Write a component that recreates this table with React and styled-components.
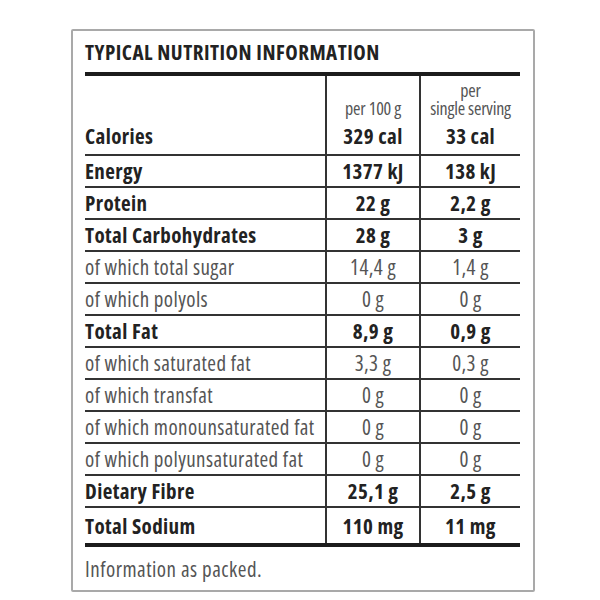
import styled, { createGlobalStyle } from "styled-components";

const nutrients = [
  { label: "Energy", per100: "1377 kJ", serving: "138 kJ", bold: true },
  { label: "Protein", per100: "22 g", serving: "2,2 g", bold: true },
  { label: "Total Carbohydrates", per100: "28 g", serving: "3 g", bold: true },
  { label: "of which total sugar", per100: "14,4 g", serving: "1,4 g" },
  { label: "of which polyols", per100: "0 g", serving: "0 g" },
  { label: "Total Fat", per100: "8,9 g", serving: "0,9 g", bold: true },
  { label: "of which saturated fat", per100: "3,3 g", serving: "0,3 g" },
  { label: "of which transfat", per100: "0 g", serving: "0 g" },
  { label: "of which monounsaturated fat", per100: "0 g", serving: "0 g" },
  { label: "of which polyunsaturated fat", per100: "0 g", serving: "0 g" },
  { label: "Dietary Fibre", per100: "25,1 g", serving: "2,5 g", bold: true },
  { label: "Total Sodium", per100: "110 mg", serving: "11 mg", bold: true },
];

const GlobalStyle = createGlobalStyle`
  body {
    margin: 0;
    background: #fff;
    font-family: "Open Sans", "Liberation Sans", sans-serif;
    font-stretch: 75%;
  }
`;

export default function App() {
  return (
    <>
      <GlobalStyle />
      <Card>
        <Title>TYPICAL NUTRITION INFORMATION</Title>
        <Rule />
        <HeaderRow>
          <Label $bold>Calories</Label>
          <HeadCell>
            <ColLabel>per 100 g</ColLabel>
            <Value $bold>329 cal</Value>
          </HeadCell>
          <HeadCell>
            <ColLabel>per<br />single serving</ColLabel>
            <Value $bold>33 cal</Value>
          </HeadCell>
        </HeaderRow>
        {nutrients.map((n, i) => (
          <Row key={i} $last={i === nutrients.length - 1}>
            <Label $bold={n.bold}>{n.label}</Label>
            <Cell><Value $bold={n.bold}>{n.per100}</Value></Cell>
            <Cell><Value $bold={n.bold}>{n.serving}</Value></Cell>
          </Row>
        ))}
        <Rule />
        <Footer>Information as packed.</Footer>
      </Card>
    </>
  );
}

const Card = styled.section`
  box-sizing: border-box;
  width: 464px;
  height: 563px;
  margin: 29px 0 0 71px;
  padding: 9px 13px 0 12px;
  border: 2px solid #a9a9a9;
  border-radius: 2px;
  display: flex;
  flex-direction: column;
`;

const Title = styled.h1`
  margin: 0 0 8px;
  font-size: 21px;
  line-height: 24px;
  font-weight: 700;
  letter-spacing: 0.5px;
  color: #222;
`;

const Rule = styled.div`
  height: 4px;
  background: #1c1c1c;
`;

const grid = `
  display: grid;
  grid-template-columns: 240px 94px 1fr;
`;

const HeaderRow = styled.div`
  ${grid}
  height: 78px;
`;

const Row = styled.div`
  ${grid}
  box-sizing: border-box;
  height: ${(p) => (p.$last ? "37px" : "32px")};
  border-top: 2px solid #333;
`;

const text = `
  font-size: 21px;
  line-height: 24px;
  letter-spacing: 0.4px;
  white-space: nowrap;
`;

const Label = styled.div`
  ${text}
  font-weight: ${(p) => (p.$bold ? 700 : 400)};
  color: ${(p) => (p.$bold ? "#222" : "#555")};
  align-self: center;
  ${Row}:last-of-type & {
    padding-bottom: 5px;
  }
  ${HeaderRow} & {
    align-self: end;
    padding-bottom: 6px;
  }
`;

const Cell = styled.div`
  display: flex;
  align-items: center;
  justify-content: center;
  border-left: 2px solid #333;
  ${Row}:last-of-type & {
    padding-bottom: 5px;
  }
`;

const HeadCell = styled.div`
  display: flex;
  flex-direction: column;
  justify-content: flex-end;
  align-items: center;
  border-left: 2px solid #333;
  padding-bottom: 6px;
`;

const ColLabel = styled.div`
  font-size: 18px;
  line-height: 18px;
  letter-spacing: -0.2px;
  color: #555;
  text-align: center;
  margin-bottom: 7px;
  white-space: nowrap;
`;

const Value = styled.div`
  ${text}
  font-weight: ${(p) => (p.$bold ? 700 : 400)};
  color: ${(p) => (p.$bold ? "#222" : "#555")};
`;

const Footer = styled.p`
  margin: 10px 0 0;
  font-size: 21px;
  line-height: 24px;
  letter-spacing: 0.5px;
  color: #555;
`;
